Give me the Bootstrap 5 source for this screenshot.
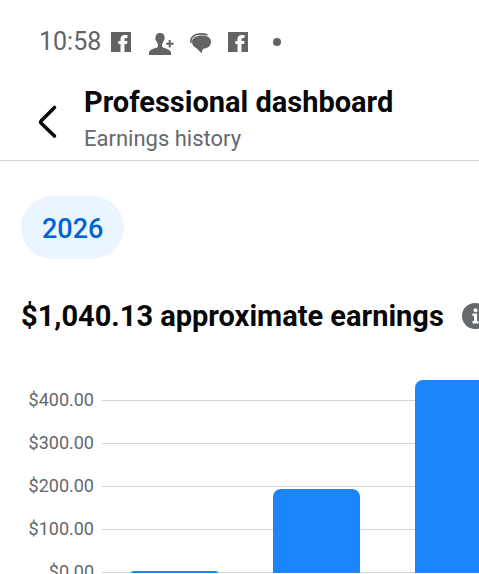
<!DOCTYPE html>
<html lang="en">
<head>
<meta charset="utf-8">
<meta name="viewport" content="width=device-width, initial-scale=1">
<title>Professional dashboard</title>
<link href="https://cdn.jsdelivr.net/npm/bootstrap@5.3.0/dist/css/bootstrap.min.css" rel="stylesheet">
<style>
  body { font-family: Roboto, "Liberation Sans", sans-serif; color: #080809; }
  .status-bar { height: 84px; padding-left: 39px; color: #636363; font-size: 25px; line-height: 32px; }
  .status-icons { gap: 16px; margin-left: 10px; }
  .app-header { height: 77px; border-bottom: 1px solid #ced0d4; padding-left: 36px; }
  .back-btn { width: 48px; }
  .app-title { font-size: 29px; line-height: 36px; font-weight: 700; }
  .app-subtitle { font-size: 22px; line-height: 38px; color: #65686c; }
  .content { padding: 35px 0 0 21px; scrollbar-width: none; }
  .content::-webkit-scrollbar { display: none; }
  .year-btn { padding: 15px 21px 12px; font-size: 27px; line-height: 36px; font-weight: 500; color: #0064d1; background: #ebf5ff; }
  .year-btn:hover { color: #0064d1; background: #dcedff; }
  .total { margin-top: 39px; gap: 18px; }
  .total h2 { font-size: 29px; line-height: 36px; font-weight: 700; }
  .chart { display: grid; grid-template-columns: 73px 1fr; column-gap: 8px; margin-top: 45px; color: #65686c; }
  .axis-label { height: 43px; font-size: 18px; line-height: 41px; text-align: right; }
  .plot-lines, .plot-bars { grid-area: 1 / 2; }
  .plot-line { height: 43px; padding-top: 21px; }
  .plot-line::before { content: ""; display: block; border-top: 1px solid #d4d5d7; }
  .plot-bars { gap: 55px; padding: 0 0 21px 29px; }
  .plot-bar { flex: 0 0 87px; background: #1c85fc; border-radius: 8px 8px 0 0; }
</style>
<script src="https://cdn.jsdelivr.net/npm/bootstrap@5.3.0/dist/js/bootstrap.bundle.min.js"></script>
</head>
<body class="bg-white">
<div class="d-flex flex-column vh-100 overflow-hidden">
  <div class="status-bar d-flex align-items-center flex-shrink-0">
    <span>10:58</span>
    <div class="status-icons d-flex align-items-center">
      <svg width="20" height="20" viewBox="0 0 20 20" aria-label="Facebook"><path fill="currentColor" d="M0 0h20v20h-6.500v-8h2.500l.5-3h-3V7.500q0-1.500 1.500-1.500H16.500V3h-2.500q-4.500 0-4.500 4v2H7.300v3H9.500V20H0z"/></svg>
      <svg width="27" height="26" viewBox="-1 -4 27 26" aria-label="New friend"><path fill="currentColor" d="M12 0c3.500 0 5 2.500 4.500 5.500 .5 1-.2 2-1 2.500-.4 1.500-1 2.500-1.500 3v2.500c1 2 8.500 2 9 6V22H1v-2.500c.5-4 8-4 9-6V11c-.6-.6-1.200-1.500-1.500-3C7.600 7.500 7 6.500 7.500 5.500 7.300 2.500 8.500 0 12 0zM20.700 7h2v2.800h2.800v2h-2.800v2.800h-2v-2.800h-2.500v-2h2.500z"/></svg>
      <svg width="22" height="24" viewBox="0 -3 22 24" aria-label="Messages"><path fill="currentColor" d="M11.800 2.400c6 0 9.200 2.400 9.200 6.600 0 3.600-2.700 6.300-8 6.800L11.500 20.300 6.500 15.300C3.500 13.800 2 11.500 2 9c0-4.300 4-6.600 9.800-6.600z"/><path fill="none" stroke="currentColor" stroke-width="1.600" d="M1.200 10C-.5 4.500 4.500.9 10.500.9c3 0 5 .1 7 1"/></svg>
      <svg width="20" height="20" viewBox="0 0 20 20" aria-label="Facebook"><path fill="currentColor" d="M0 0h20v20h-6.500v-8h2.500l.5-3h-3V7.500q0-1.500 1.500-1.500H16.500V3h-2.500q-4.500 0-4.500 4v2H7.300v3H9.500V20H0z"/></svg>
      <svg width="26" height="8" viewBox="0 0 26 8" aria-label="More notifications"><circle cx="13" cy="4" r="4" fill="currentColor"/></svg>
    </div>
  </div>
  <header class="app-header d-flex flex-shrink-0">
    <button type="button" class="back-btn btn p-0 border-0 text-start" aria-label="Back">
      <svg width="24" height="36" viewBox="0 0 24 36"><path d="M18.500 3.500 5.500 16.500Q4 18 5.500 19.500L18.500 32" fill="none" stroke="#080809" stroke-width="3.600" stroke-linecap="round" stroke-linejoin="round"/></svg>
    </button>
    <div class="text-nowrap">
      <h1 class="app-title mb-0">Professional dashboard</h1>
      <div class="app-subtitle">Earnings history</div>
    </div>
  </header>
  <main class="content flex-grow-1 overflow-auto">
    <button type="button" class="year-btn btn border-0 rounded-pill d-block">2026</button>
    <div class="total d-flex align-items-center text-nowrap overflow-hidden">
      <h2 class="mb-0">$1,040.13 approximate earnings</h2>
      <button type="button" class="btn p-0 border-0 d-flex flex-shrink-0" aria-label="About approximate earnings">
        <svg width="26" height="26" viewBox="0 0 26 26"><circle cx="13" cy="13" r="13" fill="#65686c"/><circle cx="13.500" cy="7.300" r="2" fill="#fff"/><path d="M10.500 10.500h4.500v7.500h1.500v2.500h-6V18h1.500v-5h-1.500z" fill="#fff"/></svg>
      </button>
    </div>
    <div class="chart overflow-hidden">
      <div>
        <div class="axis-label">$400.00</div>
        <div class="axis-label">$300.00</div>
        <div class="axis-label">$200.00</div>
        <div class="axis-label">$100.00</div>
        <div class="axis-label">$0.00</div>
      </div>
      <div class="plot-lines">
        <div class="plot-line"></div>
        <div class="plot-line"></div>
        <div class="plot-line"></div>
        <div class="plot-line"></div>
        <div class="plot-line"></div>
      </div>
      <div class="plot-bars d-flex align-items-end overflow-hidden">
        <div class="plot-bar" style="height: 2px"></div>
        <div class="plot-bar" style="height: 84px"></div>
        <div class="plot-bar" style="height: 193px"></div>
      </div>
    </div>
  </main>
</div>
</body>
</html>
